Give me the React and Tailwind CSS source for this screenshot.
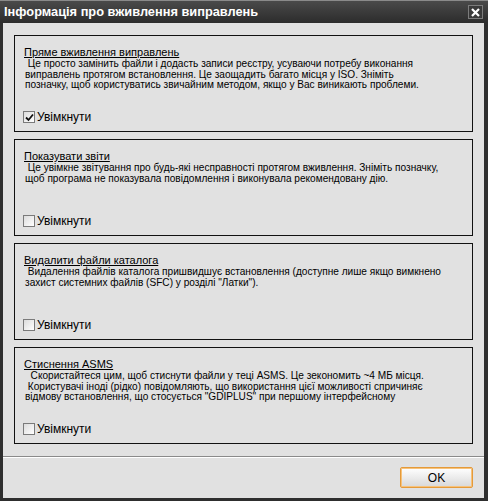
import React, { useState } from "react";

const groups = [
  {
    title: "Пряме вживлення виправлень",
    lines: [
      " Це просто замінить файли і додасть записи реєстру, усуваючи потребу виконання",
      "виправлень протягом встановлення. Це заощадить багато місця у ISO. Зніміть",
      "позначку, щоб користуватись звичайним методом, якщо у Вас виникають проблеми.",
    ],
    checked: true,
  },
  {
    title: "Показувати звіти",
    lines: [
      " Це увімкне звітування про будь-які несправності протягом вживлення. Зніміть позначку,",
      "щоб програма не показувала повідомлення і виконувала рекомендовану дію.",
    ],
    checked: false,
  },
  {
    title: "Видалити файли каталога",
    lines: [
      " Видалення файлів каталога пришвидшує встановлення (доступне лише якщо вимкнено",
      "захист системних файлів (SFC) у розділі \"Латки\").",
    ],
    checked: false,
  },
  {
    title: "Стиснення ASMS",
    lines: [
      "  Скористайтеся цим, щоб стиснути файли у теці ASMS. Це зекономить ~4 МБ місця.",
      " Користувачі іноді (рідко) повідомляють, що використання цієї можливості спричиняє",
      "відмову встановлення, що стосується \"GDIPLUS\" при першому інтерфейсному",
    ],
    checked: false,
  },
];

function CheckBox({ checked, onChange }) {
  return (
    <button
      type="button"
      onClick={onChange}
      className="w-[12px] h-[12px] border border-[#7a7a7a] bg-gradient-to-br from-[#dcdcdc] to-[#ffffff] flex items-center justify-center"
    >
      {checked && (
        <svg width="9" height="9" viewBox="0 0 9 9">
          <path d="M1 4.5 L3.5 7 L8 1.5" stroke="#111" strokeWidth="1.8" fill="none" />
        </svg>
      )}
    </button>
  );
}

function App() {
  const [checks, setChecks] = useState(groups.map((g) => g.checked));

  function toggle(i) {
    const next = [...checks];
    next[i] = !next[i];
    setChecks(next);
  }

  return (
    <div
      className="w-[488px] h-[501px] flex flex-col bg-[#e1e1e1] text-black"
      style={{ fontFamily: "'Liberation Sans', Arial, sans-serif" }}
    >
      {/* Title bar */}
      <div className="h-[23px] flex items-center justify-between pl-[4px] pr-[5px] border-t border-[#8a8a8a] bg-gradient-to-b from-[#4a4a4a] to-[#2c2c2c]">
        <span className="text-white font-bold text-[12.8px] leading-none">
          Інформація про вживлення виправлень
        </span>
        <div className="w-[15px] h-[14px] border border-[#7c7c7c] bg-[#3a3a3a] flex items-center justify-center">
          <svg width="9" height="9" viewBox="0 0 9 9">
            <path d="M1 1 L8 8 M8 1 L1 8" stroke="#fff" strokeWidth="2.2" />
          </svg>
        </div>
      </div>

      {/* Body */}
      <div className="flex-1 flex flex-col border-l-[3px] border-r-[4px] border-b-[3px] border-[#2e2e2e]">
        <div className="flex flex-col gap-[7px] pt-[12px] pl-[11px] pr-[11px]">
          {groups.map((g, i) => (
            <div key={i} className="h-[97px] border border-[#111] flex flex-col pl-[8px] pt-[11px] pb-[8px]">
              <div className="pl-[1px] text-[11px] leading-[11px] underline whitespace-nowrap">{g.title}</div>
              <div className="mt-[1px] pl-[2px] text-[10.1px] leading-[10.6px] whitespace-pre">
                {g.lines.map((l, j) => (
                  <div key={j}>{l}</div>
                ))}
              </div>
              <label className="mt-auto flex items-center gap-[2px] text-[12px] leading-[12px]">
                <CheckBox checked={checks[i]} onChange={() => toggle(i)} />
                <span>Увімкнути</span>
              </label>
            </div>
          ))}
        </div>

        <div className="mt-auto border-t border-[#8a8a8a] shadow-[inset_0_1px_0_#ffffff] h-[42px] flex items-start justify-end pr-[11px] pt-[10px]">
          <button className="w-[73px] h-[21px] rounded-[2px] border border-[#e49a3a] bg-gradient-to-b from-[#ffffff] to-[#d8d8d8] text-[12px] leading-none shadow-[inset_0_0_0_1px_#f7c27a]">
            OK
          </button>
        </div>
      </div>
    </div>
  );
}

export default App;
